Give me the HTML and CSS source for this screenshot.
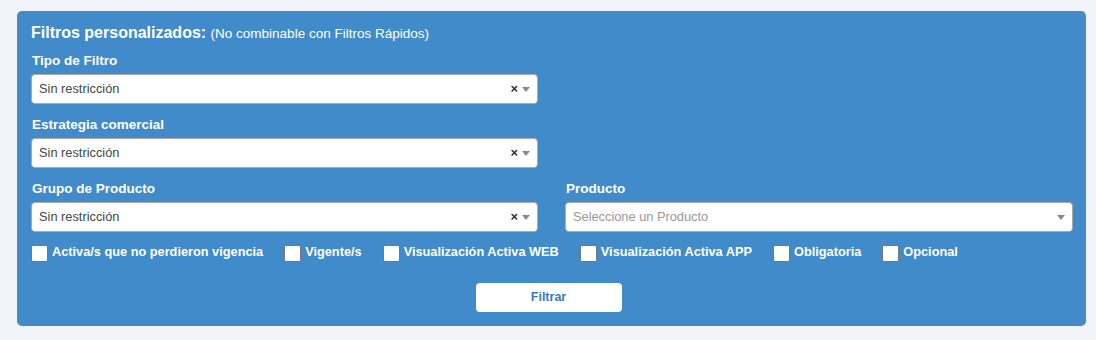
FILE: index.html
```html
<!DOCTYPE html>
<html lang="es">

<head>
    <meta charset="UTF-8">
    <meta name="viewport" content="width=device-width, initial-scale=1.0">
    <title>Filtros</title>
    <link rel="stylesheet" href="styles.css">
</head>

<body>
    <div class="panel">
        <h3 class="panel-title">Filtros personalizados: <small>(No combinable con Filtros Rápidos)</small></h3>

        <div class="row">
            <div class="field">
                <label>Tipo de Filtro</label>
                <div class="select">
                    <span class="select-value">Sin restricción</span>
                    <span class="select-clear">×</span>
                    <span class="select-arrow"></span>
                </div>
            </div>
        </div>

        <div class="row">
            <div class="field">
                <label>Estrategia comercial</label>
                <div class="select">
                    <span class="select-value">Sin restricción</span>
                    <span class="select-clear">×</span>
                    <span class="select-arrow"></span>
                </div>
            </div>
        </div>

        <div class="row">
            <div class="field">
                <label>Grupo de Producto</label>
                <div class="select">
                    <span class="select-value">Sin restricción</span>
                    <span class="select-clear">×</span>
                    <span class="select-arrow"></span>
                </div>
            </div>
            <div class="field">
                <label>Producto</label>
                <div class="select">
                    <span class="select-value placeholder">Seleccione un Producto</span>
                    <span class="select-arrow"></span>
                </div>
            </div>
        </div>

        <!-- opciones -->
        <div class="checks">
            <label class="check"><span class="box"></span>Activa/s que no perdieron vigencia</label>
            <label class="check"><span class="box"></span>Vigente/s</label>
            <label class="check"><span class="box"></span>Visualización Activa WEB</label>
            <label class="check"><span class="box"></span>Visualización Activa APP</label>
            <label class="check"><span class="box"></span>Obligatoria</label>
            <label class="check"><span class="box"></span>Opcional</label>
        </div>

        <div class="actions">
            <button type="button">Filtrar</button>
        </div>
    </div>
</body>

</html>
```

FILE: styles.css
```css
/* styles.css */
body {
    margin: 0;
    padding: 11px 10px 0 17px;
    background-color: #f3f4f9;
    font-family: "Liberation Sans", Arial, sans-serif;
}

.panel {
    width: 1069px;
    box-sizing: border-box;
    background-color: #418bca;
    border-radius: 5px;
    padding: 12px 13px 14px 14px;
    color: #fff;
}

.panel-title {
    margin: 0 0 8px 0;
    font-size: 16px;
    line-height: 20px;
    font-weight: bold;
}

.panel-title small {
    font-size: 13.5px;
    font-weight: normal;
}

.row {
    display: grid;
    grid-template-columns: 507px 508px;
    gap: 27px;
    margin-bottom: 12.5px;
}

.field label {
    display: block;
    font-size: 13.5px;
    font-weight: bold;
    line-height: 18px;
    margin: 0 0 4px 1px;
}

.select {
    display: flex;
    align-items: center;
    height: 29.5px;
    box-sizing: border-box;
    background: #fff;
    border: 1px solid #aaa;
    border-radius: 4px;
    padding: 0 7px 0 7px;
    color: #444;
    font-size: 12.8px;
}

.select-value {
    flex: 1;
}

.placeholder {
    color: #999;
}

.select-clear {
    font-weight: bold;
    font-size: 13px;
    color: #333;
    margin-right: 4px;
}

.select-arrow {
    width: 0;
    height: 0;
    border-left: 4px solid transparent;
    border-right: 4px solid transparent;
    border-top: 5px solid #888;
    margin-top: 2px;
}

.checks {
    display: flex;
    align-items: center;
    margin-top: -1.5px;
}

.check {
    display: flex;
    align-items: center;
    font-size: 12.75px;
    font-weight: bold;
    line-height: 18px;
    margin-right: 21px;
}

.box {
    width: 15px;
    height: 15px;
    background: #fff;
    border: 1px solid #767676;
    border-radius: 2px;
    margin-right: 4px;
    margin-top: 2px;
}

.actions {
    display: flex;
    justify-content: center;
    margin-top: 21px;
    padding-right: 7px;
}

button {
    width: 146px;
    height: 29px;
    background-color: #fff;
    color: #3a7bbf;
    border: none;
    border-radius: 4px;
    font-family: inherit;
    font-size: 12.5px;
    font-weight: bold;
    cursor: pointer;
}
```
